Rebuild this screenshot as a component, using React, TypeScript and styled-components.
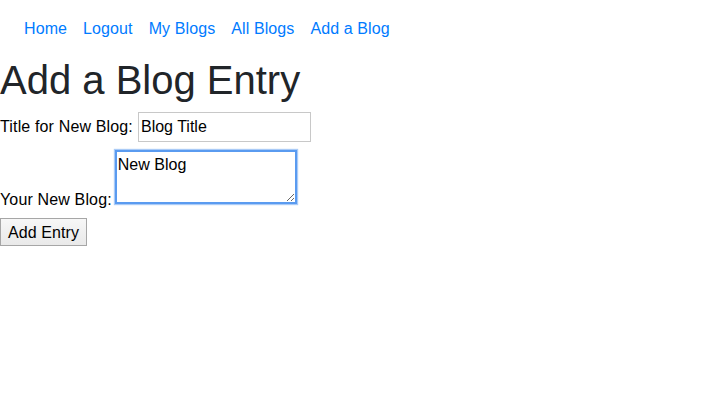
import React from "react";
import styled, { createGlobalStyle } from "styled-components";

const Global = createGlobalStyle`
  html, body { margin: 0; padding: 0; background: #fff; }
  body { font-family: "Liberation Sans", Arial, sans-serif; color: #212529; font-size: 16px; line-height: 1.5; }
`;

const Nav = styled.nav`
  display: flex;
  padding: 9px 8px 7px 16px;
`;

const NavLink = styled.a`
  color: #007bff;
  text-decoration: none;
  padding: 8px 8px;
  font-size: 16px;
  line-height: 24px;
  letter-spacing: 0.1px;
`;

const Title = styled.h1`
  margin: 0 0 8px;
  font-size: 40px;
  font-weight: 500;
  line-height: 48px;
  color: #212529;
`;

const Form = styled.form`
  display: flex;
  flex-direction: column;
  align-items: flex-start;
`;

const Row = styled.div<{ $gap: number; $align: string }>`
  display: flex;
  align-items: ${(p) => p.$align};
  margin-bottom: ${(p) => p.$gap}px;
`;

const Label = styled.label<{ $drop?: number; $space: number }>`
  color: #000;
  font-size: 16px;
  line-height: 20px;
  letter-spacing: 0.15px;
  margin-right: ${(p) => p.$space}px;
  margin-bottom: ${(p) => -(p.$drop ?? 0)}px;
`;

const TextInput = styled.input`
  box-sizing: border-box;
  width: 173px;
  height: 30px;
  border: 1px solid #c8c8c8;
  padding: 1px 2px;
  font-family: "Liberation Sans", Arial, sans-serif;
  font-size: 16px;
  color: #000;
  outline: none;
`;

const TextArea = styled.textarea`
  box-sizing: border-box;
  width: 182px;
  height: 54px;
  border: 2px solid #5a9bf0;
  box-shadow: 0 0 1px 1px rgba(100, 160, 240, 0.55);
  padding: 3px 1px 1px;
  font-family: "Liberation Sans", Arial, sans-serif;
  font-size: 16px;
  line-height: 19px;
  color: #000;
  outline: none;
`;

const Button = styled.button`
  box-sizing: border-box;
  height: 28px;
  width: 87px;
  padding: 1px 6px 0;
  border: 1px solid #a6a6a6;
  border-radius: 0;
  background: linear-gradient(#f7f7f7, #e9e9e9);
  font-family: "Liberation Sans", Arial, sans-serif;
  font-size: 16px;
  letter-spacing: 0.1px;
  color: #000;
`;

export default function App() {
  return (
    <>
      <Global />
      <Nav>
        <NavLink href="#">Home</NavLink>
        <NavLink href="#">Logout</NavLink>
        <NavLink href="#">My Blogs</NavLink>
        <NavLink href="#">All Blogs</NavLink>
        <NavLink href="#">Add a Blog</NavLink>
      </Nav>
      <Title>Add a Blog Entry</Title>
      <Form onSubmit={(e) => e.preventDefault()}>
        <Row $gap={8} $align="center">
          <Label $space={5}>Title for New Blog:</Label>
          <TextInput defaultValue="Blog Title" />
        </Row>
        <Row $gap={14} $align="flex-end">
          <Label $space={3} $drop={6}>Your New Blog:</Label>
          <TextArea defaultValue="New Blog" />
        </Row>
        <Button type="submit">Add Entry</Button>
      </Form>
    </>
  );
}
